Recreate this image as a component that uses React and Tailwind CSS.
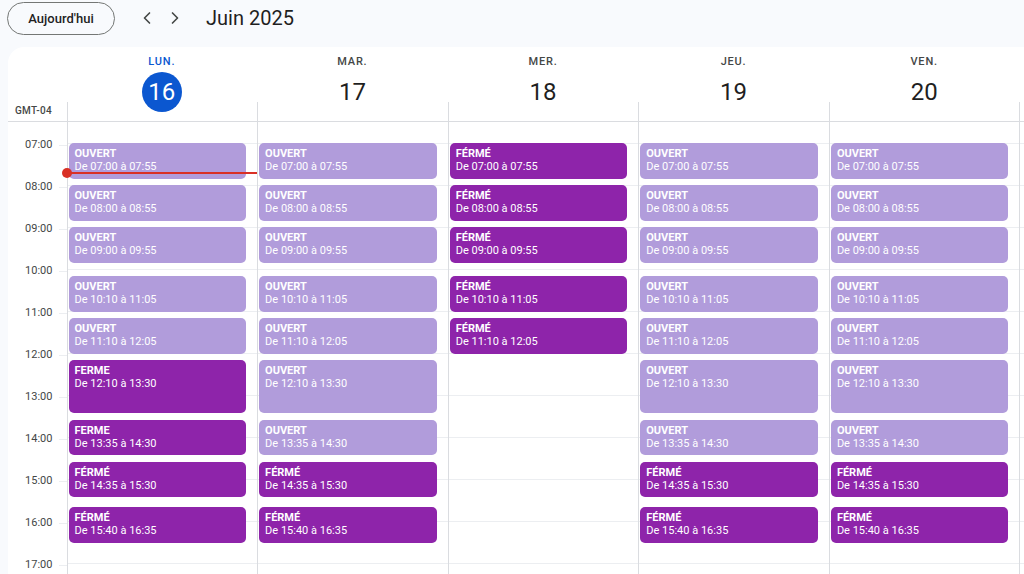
import React from "react";
import { ChevronLeft, ChevronRight } from "lucide-react";

const HOUR_PX = 42;
const START = 6.5; // 06:30 at top of body

const toH = (s) => {
  const [h, m] = s.split(":").map(Number);
  return h + m / 60;
};

const O = "OUVERT";
const F = "FÉRMÉ";
const FE = "FERME";

const mk = (label, from, to, dark) => ({ label, from, to, dark });

const openWeek = [
  mk(O, "07:00", "07:55", false),
  mk(O, "08:00", "08:55", false),
  mk(O, "09:00", "09:55", false),
  mk(O, "10:10", "11:05", false),
  mk(O, "11:10", "12:05", false),
  mk(O, "12:10", "13:30", false),
  mk(O, "13:35", "14:30", false),
  mk(F, "14:35", "15:30", true),
  mk(F, "15:40", "16:35", true),
];

const days = [
  {
    name: "LUN.",
    num: "16",
    today: true,
    events: [
      mk(O, "07:00", "07:55", false),
      mk(O, "08:00", "08:55", false),
      mk(O, "09:00", "09:55", false),
      mk(O, "10:10", "11:05", false),
      mk(O, "11:10", "12:05", false),
      mk(FE, "12:10", "13:30", true),
      mk(FE, "13:35", "14:30", true),
      mk(F, "14:35", "15:30", true),
      mk(F, "15:40", "16:35", true),
    ],
  },
  { name: "MAR.", num: "17", events: openWeek },
  {
    name: "MER.",
    num: "18",
    events: [
      mk(F, "07:00", "07:55", true),
      mk(F, "08:00", "08:55", true),
      mk(F, "09:00", "09:55", true),
      mk(F, "10:10", "11:05", true),
      mk(F, "11:10", "12:05", true),
    ],
  },
  { name: "JEU.", num: "19", events: openWeek },
  { name: "VEN.", num: "20", events: openWeek },
];

const hours = ["07:00", "08:00", "09:00", "10:00", "11:00", "12:00", "13:00", "14:00", "15:00", "16:00", "17:00"];

function HourLines() {
  return (
    <div className="flex flex-col">
      <div className="h-[21px] shrink-0" />
      {hours.map((h) => (
        <div key={h} className="h-[42px] shrink-0 border-t border-[#eceef1]" />
      ))}
    </div>
  );
}

function Event({ e }) {
  const top = (toH(e.from) - START) * HOUR_PX;
  const height = (toH(e.to) - toH(e.from)) * HOUR_PX - 3;
  return (
    <div
      className={
        "absolute left-[1px] right-[11px] rounded-[5px] pl-[6px] pt-[4px] text-white text-[11px] leading-[13px] overflow-hidden " +
        (e.dark ? "bg-[#8e24aa]" : "bg-[#b19cdb]")
      }
      style={{ top, height }}
    >
      <div className="font-bold">{e.label}</div>
      <div>
        De {e.from} à {e.to}
      </div>
    </div>
  );
}

export default function App() {
  return (
    <div
      className="w-[1024px] h-[574px] overflow-hidden bg-[#f8fafd] flex flex-col text-[#1f1f1f]"
      style={{ fontFamily: "Roboto, 'Noto Sans', sans-serif" }}
    >
      {/* Top bar */}
      <div className="h-[40px] shrink-0 flex items-start">
        <button className="ml-[7px] mt-[2px] w-[108px] h-[33px] rounded-full border border-[#747775] text-[13px] font-medium text-[#1f1f1f] flex items-center justify-center">
          Aujourd'hui
        </button>
        <div className="ml-[22px] mt-[8px] flex items-center gap-[8px] text-[#444746]">
          <ChevronLeft size={20} strokeWidth={2} />
          <ChevronRight size={20} strokeWidth={2} />
        </div>
        <div className="ml-[21px] mt-[6px] text-[20px] leading-[24px] text-[#1f1f1f]">Juin 2025</div>
      </div>

      {/* Card */}
      <div className="mt-[7px] ml-[8px] flex-1 bg-white rounded-tl-[16px] overflow-hidden flex flex-col">
        {/* Header */}
        <div className="h-[75px] shrink-0 border-b border-[#dadce0] grid grid-cols-[58.5px_repeat(5,190.6px)_1fr]">
          <div className="relative">
            <div className="absolute left-[7px] top-[58px] text-[10px] leading-[12px] font-medium text-[#444746] tracking-[0.3px]">
              GMT-04
            </div>
          </div>
          {days.map((d) => (
            <div key={d.num} className="relative flex flex-col items-center pt-[7px]">
              <div
                className={
                  "text-[11px] leading-[16px] font-medium tracking-[0.8px] " +
                  (d.today ? "text-[#0b57d0]" : "text-[#444746]")
                }
              >
                {d.name}
              </div>
              <div
                className={
                  "mt-[2px] w-[40px] h-[40px] rounded-full flex items-center justify-center text-[24px] " +
                  (d.today ? "bg-[#0b57d0] text-white" : "text-[#1f1f1f]")
                }
              >
                {d.num}
              </div>
              <div className="absolute left-0 bottom-0 w-px h-[19px] bg-[#dadce0]" />
            </div>
          ))}
          <div className="relative">
            <div className="absolute left-0 bottom-0 w-px h-[19px] bg-[#dadce0]" />
          </div>
        </div>

        {/* Body */}
        <div className="flex-1 grid grid-cols-[58.5px_repeat(5,190.6px)_1fr] overflow-hidden">
          {/* Gutter */}
          <div className="flex flex-col">
            <div className="h-[16px] shrink-0" />
            {hours.map((h) => (
              <div key={h} className="h-[42px] shrink-0">
                <div className="h-[14px] flex items-center justify-end">
                  <span className="text-[11px] leading-[14px] text-[#444746]">{h}</span>
                  <div className="ml-[6px] w-[8px] h-px bg-[#eceef1]" />
                </div>
              </div>
            ))}
          </div>

          {days.map((d, i) => (
            <div key={d.num} className="relative border-l border-[#dadce0]">
              <HourLines />
              {d.events.map((e, j) => (
                <Event key={j} e={e} />
              ))}
              {i === 0 && (
                <div className="absolute left-0 right-[-1px] top-[50px] h-[2px] bg-[#d93025]">
                  <div className="absolute left-[-6px] top-[-4px] w-[10px] h-[10px] rounded-full bg-[#d93025]" />
                </div>
              )}
            </div>
          ))}
          <div className="relative border-l border-[#dadce0]">
            <HourLines />
          </div>
        </div>
      </div>
    </div>
  );
}
